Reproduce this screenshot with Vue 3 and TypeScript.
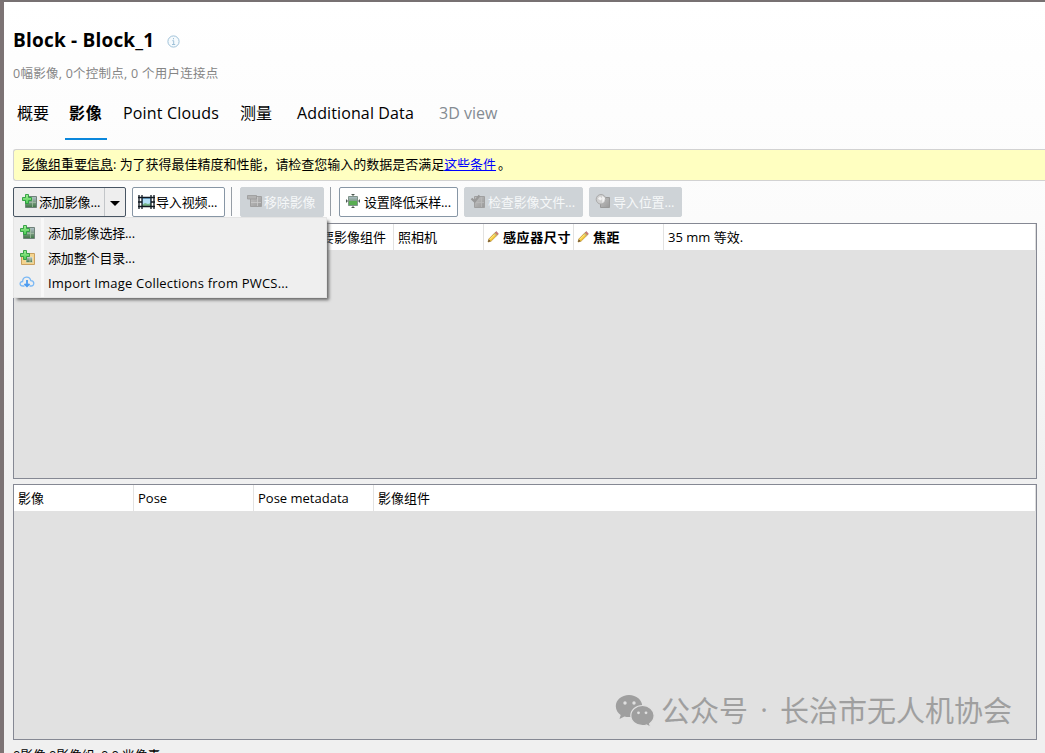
<script setup lang="ts">
import { ref } from 'vue'

interface Tab { label: string; cls: string }
interface Column { label: string; width: number; editable?: boolean; clipped?: boolean }

const tabs: Tab[] = [
  { label: '概要', cls: 'overview' },
  { label: '影像', cls: 'photos' },
  { label: 'Point Clouds', cls: 'clouds' },
  { label: '测量', cls: 'surveys' },
  { label: 'Additional Data', cls: 'extra' },
  { label: '3D view', cls: 'view' },
]
const active = ref('photos')

const groupColumns: Column[] = [
  { label: '主要影像组件', width: 380, clipped: true },
  { label: '照相机', width: 90 },
  { label: '感应器尺寸', width: 90, editable: true },
  { label: '焦距', width: 90, editable: true },
  { label: '35 mm 等效.', width: 372 },
]
const photoColumns: Column[] = [
  { label: '影像', width: 120 },
  { label: 'Pose', width: 120 },
  { label: 'Pose metadata', width: 120 },
  { label: '影像组件', width: 662 },
]
const menu = [
  { label: '添加影像选择...', icon: 'photo' },
  { label: '添加整个目录...', icon: 'folder' },
  { label: 'Import Image Collections from PWCS...', icon: 'cloud' },
]
</script>

<template>
  <main class="window">
    <svg class="defs" width="0" height="0" aria-hidden="true">
      <defs>
        <linearGradient id="leaf" x1="0" y1="0" x2="0" y2="1">
          <stop offset="0" stop-color="#b3c2cc" /><stop offset=".5" stop-color="#7e9c88" /><stop offset="1" stop-color="#3d7741" />
        </linearGradient>
        <linearGradient id="plus" x1="0" y1="0" x2="0" y2="1">
          <stop offset="0" stop-color="#a4ee94" /><stop offset="1" stop-color="#4acb54" />
        </linearGradient>
        <linearGradient id="ash" x1="0" y1="0" x2="1" y2="1">
          <stop offset="0" stop-color="#c2c2c2" /><stop offset="1" stop-color="#999" />
        </linearGradient>
        <symbol id="i-photo" viewBox="0 0 16 16">
          <path d="M4.500 3.500h11v11h-11z" fill="url(#leaf)" stroke="#70827a" />
          <path d="M11.500 4v10M5 9.500h10" stroke="#a9c4a8" stroke-width=".7" />
          <path d="M4.500 1.500h3v3h3v3h-3v3h-3v-3h-3v-3h3z" fill="url(#plus)" stroke="#2a9c3d" stroke-width=".9" />
        </symbol>
        <symbol id="i-folder" viewBox="0 0 16 16">
          <path d="M2.500 7h5l1-2.500h7v11h-13z" fill="#f4d48e" stroke="#c9a061" />
          <path d="M7 8h6.500v5.500H7z" fill="url(#leaf)" stroke="#eee9d0" stroke-width=".6" />
          <path d="M11 8v5" stroke="#c9d8bd" stroke-width=".6" />
          <path d="M4.500 1.500h3v3h3v3h-3v3h-3v-3h-3v-3h3z" fill="url(#plus)" stroke="#2a9c3d" stroke-width=".9" />
        </symbol>
        <symbol id="i-cloud" viewBox="0 0 16 16">
          <path d="M5.500 12H4C.2 12 .2 7.500 3.600 7.500 3.700 2.200 10.600 1.500 11.800 6.600c4 .2 3.900 5.400.2 5.400h-1.500" fill="none" stroke="#7ab8f5" stroke-width="1.300" />
          <path d="M8 6v6M5.500 9.800L8 12.300l2.500-2.500" fill="none" stroke="#4b9bf0" stroke-width="1.800" />
        </symbol>
        <symbol id="i-film" viewBox="0 0 17 16">
          <path d="M4 4h9v8H4z" fill="#79b8e5" /><path d="M5 5h7v6H5z" fill="#b4e0f7" /><path d="M4 12v-1l3-2 3 1 3-1v3z" fill="#78b68a" />
          <path d="M1 1v14M4 1v14M13 1v14M16 1v14M0 3.500h17M0 12.500h17M0 8h4M13 8h4" stroke="#101820" stroke-width="1.300" fill="none" />
        </symbol>
        <symbol id="i-remove" viewBox="0 0 16 16">
          <path d="M4.500 3.500h11v10h-11z" fill="url(#ash)" stroke="#a0a0a0" />
          <path d="M11.500 4v9M5 9.500h10" stroke="#cacaca" stroke-width=".8" />
          <path d="M1.500 2.500h9v3.500h-9z" fill="#b2b2b2" stroke="#999" stroke-width=".8" />
        </symbol>
        <symbol id="i-scale" viewBox="0 0 16 16">
          <path d="M3.500 3.500h9v9h-9z" fill="url(#leaf)" stroke="#7f948a" />
          <path d="M4 8h8v4H4z" fill="#59ad51" />
          <path d="M8 1v2M8 13v2M1 8h2M13 8h2M6.500 1.500h3M6.500 14.500h3M1.500 6.500v3M14.500 6.500v3" stroke="#4c5951" />
        </symbol>
        <symbol id="i-check" viewBox="0 0 16 16">
          <path d="M4.500 3.500h10v11h-10z" fill="url(#ash)" stroke="#a0a0a0" />
          <path d="M11.500 4v10M5 9.500h9" stroke="#bababa" stroke-width=".8" />
          <path d="M1.500 5.500l3.200 3L9.500 2.500" fill="none" stroke="#999" stroke-width="2.300" />
        </symbol>
        <symbol id="i-position" viewBox="0 0 16 16">
          <path d="M5.500 4.500h9v10h-9z" fill="url(#ash)" stroke="#999" />
          <circle cx="6" cy="6.300" r="4.800" fill="#d0d0d0" stroke="#aaa" />
          <path d="M3 5.500l2-2 2 2-1 2-2-1zM7 3l3 2-1 3-1.500 2" fill="#f3f3f3" />
        </symbol>
        <symbol id="i-pencil" viewBox="0 0 12 12">
          <path d="M1 11l1-3.200L8.200 1.500l2.300 2.300-6.300 6.300z" fill="#f7c936" stroke="#b8892f" stroke-width=".7" />
          <path d="M8.200 1.500l1-1 2.300 2.300-1 1z" fill="#dc7777" stroke="#8d5d66" stroke-width=".5" />
          <path d="M7.200 2.500l2.300 2.300" stroke="#91a2b8" /><path d="M1 11l.8-2.700 1.900 1.900z" fill="#6b5234" />
          <path d="M2.800 8.500l5-5" stroke="#fff09a" />
        </symbol>
      </defs>
    </svg>

    <header class="heading">
      <h1>Block - Block_1</h1>
      <svg class="info" viewBox="0 0 13 13"><circle cx="6.500" cy="6.500" r="5.600" /><path d="M6.500 3v1.300M5.300 5.700h1.400v3.700M5 9.500h3.200" /></svg>
    </header>
    <p class="summary">0幅影像, 0个控制点, 0 个用户连接点</p>
    <nav class="tabs">
      <button v-for="t in tabs" :key="t.cls" :class="['tab', t.cls, { active: active === t.cls }]" @click="active = t.cls">{{ t.label }}</button>
    </nav>
    <div class="notice"><u>影像组重要信息</u>: 为了获得最佳精度和性能，请检查您输入的数据是否满足<a href="#">这些条件</a><span class="stop">。</span></div>

    <div class="toolbar">
      <div class="split">
        <button class="split-main"><svg class="icon"><use href="#i-photo" /></svg><span>添加影像...</span></button>
        <button class="split-arrow" aria-label="menu"><i /></button>
        <ul class="menu">
          <li v-for="m in menu" :key="m.icon" :class="m.icon"><svg class="icon"><use :href="'#i-' + m.icon" /></svg><span>{{ m.label }}</span></li>
        </ul>
      </div>
      <button class="btn video"><svg class="icon film"><use href="#i-film" /></svg><span>导入视频...</span></button>
      <b class="rule" />
      <button class="btn remove off"><svg class="icon"><use href="#i-remove" /></svg><span>移除影像</span></button>
      <b class="rule" />
      <button class="btn scale"><svg class="icon"><use href="#i-scale" /></svg><span>设置降低采样...</span></button>
      <button class="btn check off"><svg class="icon"><use href="#i-check" /></svg><span>检查影像文件...</span></button>
      <button class="btn position off"><svg class="icon"><use href="#i-position" /></svg><span>导入位置...</span></button>
    </div>

    <section class="table">
      <div class="thead">
        <div v-for="c in groupColumns" :key="c.label" :class="['cell', { editable: c.editable, clipped: c.clipped }]" :style="{ width: c.width + 'px' }">
          <svg v-if="c.editable" class="pencil"><use href="#i-pencil" /></svg><span>{{ c.label }}</span>
        </div>
      </div>
    </section>
    <section class="table second">
      <div class="thead">
        <div v-for="c in photoColumns" :key="c.label" class="cell" :style="{ width: c.width + 'px' }"><span>{{ c.label }}</span></div>
      </div>
      <div class="watermark">
        <svg viewBox="0 0 40 34">
          <path d="M14 1C6.500 1 .8 6 .8 12.200c0 3.600 1.900 6.700 4.900 8.700L4.500 25l4.900-2.500c1.500.4 3 .6 4.600.6 7.400 0 13.300-4.900 13.300-10.900S21.400 1 14 1z" />
          <path class="front" d="M27.500 11.500c-6.600 0-11.700 4.500-11.700 10.100s5.100 10 11.700 10c1.400 0 2.700-.2 3.900-.6l4.200 2.300-1-3.600c2.700-1.900 4.500-4.800 4.500-8.100 0-5.600-5-10.100-11.600-10.100z" />
          <g class="eyes"><circle cx="10" cy="9" r="1.700" /><circle cx="19" cy="9" r="1.700" /><circle cx="23.500" cy="18.800" r="1.400" /><circle cx="31" cy="18.800" r="1.400" /></g>
        </svg>
        <span class="account">公众号</span><span class="dot">·</span><span class="name">长治市无人机协会</span>
      </div>
    </section>
    <footer>0影像,0影像组, 0.0 兆像素</footer>
  </main>
</template>

<style>
html, body { margin: 0; overflow: hidden; background: #f0f0f0; }
</style>

<style scoped>
* { box-sizing: border-box; }
.window {
  width: 1045px; height: 753px; overflow: hidden; padding: 25px 0 0 9px;
  display: flex; flex-direction: column;
  border-left: 4px solid #7c7374; border-top: 2px solid #777172;
  background: linear-gradient(#fff 0, #fbfbfb 220px, #f0f0f0 480px);
  color: #000; font: 13px/18px "Open Sans", "Noto Sans CJK SC", sans-serif;
}
.defs { position: absolute; }
button { font: inherit; color: inherit; letter-spacing: inherit; padding: 0; margin: 0; border: 0; background: none; white-space: nowrap; }
.heading { display: flex; align-items: center; height: 26px; flex: none; }
h1 { margin: 0; font-size: 19px; line-height: 26px; font-weight: 700; width: 154px; letter-spacing: .2px; white-space: nowrap; }
.info { width: 13px; height: 13px; margin-top: 3px; fill: #f5fafd; stroke: #9fc1d8; stroke-width: 1; }
.summary { margin: 11px 0 0; height: 20px; line-height: 20px; font-size: 12.500px; letter-spacing: .25px; color: #858585; flex: none; }
.tabs { display: flex; height: 41px; margin-top: 15px; flex: none; font-size: 16px; }
.tab { height: 41px; padding-bottom: 11px; text-align: left; border-bottom: 2px solid transparent; line-height: 28px; }
.overview { width: 52px; padding-left: 4px; }
.photos { width: 42px; padding-left: 4px; letter-spacing: .8px; }
.active { border-color: #0b87dc; font-weight: 700; }
.clouds { width: 133px; padding-left: 16px; letter-spacing: .17px; }
.surveys { width: 44px; }
.extra { width: 142px; margin-left: 13px; letter-spacing: .12px; }
.view { color: #848b92; }
.notice {
  height: 32px; margin-top: 9px; padding-left: 8px; line-height: 29px; flex: none; letter-spacing: -.02px;
  background: #ffffc1; border: 1px solid #d2d2d2; border-right: 0; border-radius: 3px 0 0 3px; white-space: nowrap;
}
.notice a { color: #00f; }
.stop { margin-left: 2px; }
.toolbar { display: flex; height: 30px; margin-top: 6px; flex: none; letter-spacing: -.15px; }
.split { position: relative; display: flex; width: 113px; border: 1px solid #485563; border-radius: 2px; background: #eee; }
.split-main { display: flex; align-items: center; width: 91px; padding-left: 7px; border-right: 1px solid #c3c6c9; }
.split-arrow { flex: 1; display: flex; justify-content: center; align-items: center; }
.split-arrow i { border: 5px solid transparent; border-top-color: #000; border-bottom: 0; margin-top: 2px; }
.icon { width: 16px; height: 16px; flex: none; }
.toolbar .btn .icon, .split-main .icon { margin-top: -2px; }
.split-main span { margin-left: 2px; }
.btn { display: flex; align-items: center; border: 1px solid #8796a5; border-radius: 2px; background: #fff; }
.video { width: 93px; margin-left: 6px; padding-left: 5px; }
.toolbar .btn .film { width: 17px; margin-top: 0; }
.video span { margin-left: 1px; }
.rule { width: 1px; height: 29px; margin-left: 6px; background: #969da5; }
.off { background: #ced3d7; border-color: #ced3d7; color: #f6f8f9; }
.remove { width: 84px; margin-left: 8px; padding-left: 5px; }
.remove span { margin-left: 2px; }
.scale { width: 119px; margin-left: 8px; padding-left: 5px; }
.scale span { margin-left: 3px; }
.check { width: 119px; margin-left: 6px; padding-left: 5px; }
.check span { margin-left: 2px; }
.position { width: 93px; margin-left: 6px; padding-left: 5px; }
.position span { margin-left: 2px; }
.menu {
  position: absolute; z-index: 3; left: -1px; top: 29px; width: 314px; height: 81px; margin: 0; padding: 2px;
  list-style: none; border: 1px solid #e4e4e4; background: linear-gradient(90deg, #efefef 27px, #f8f8f8 27px 30px, #efefef 30px);
  box-shadow: 3px 3px 3px -1px #666;
}
.menu li { display: flex; align-items: center; height: 25px; padding-left: 3px; white-space: nowrap; }
.menu .icon { margin-top: -1px; }
.menu span { margin-left: 13px; }
.menu .cloud { letter-spacing: .2px; }
.table { position: relative; flex: none; width: 1024px; height: 256px; margin-top: 6px; border: 1px solid #858893; background: #e1e1e1; }
.second { margin-top: 5px; }
.thead { display: flex; height: 26px; background: #fff; border-right: 1px solid #ddd; }
.cell { display: flex; align-items: center; flex: none; padding-left: 4px; border-right: 1px solid #e2e2e2; white-space: nowrap; }
.cell:last-child { border-right: 0; flex: 1; }
.clipped { justify-content: flex-end; padding: 0 7px 0 0; }
.editable { font-weight: 700; padding-left: 3px; letter-spacing: .6px; }
.editable span { margin-left: 4px; }
.pencil { width: 12px; height: 12px; flex: none; }
.watermark { position: absolute; left: 601px; top: 206px; height: 38px; display: flex; align-items: center; color: #9f9f9f; font: 29px/38px "Noto Sans CJK SC", sans-serif; white-space: nowrap; }
.watermark svg { width: 40px; height: 34px; margin-top: 1px; fill: #9f9f9f; }
.watermark span { margin-top: -2px; }
.front { stroke: #e0e0e0; stroke-width: 1.200; }
.eyes { fill: #e0e0e0; }
.watermark .account { margin-left: 6px; }
.dot { width: 32px; text-align: center; font-family: "Open Sans", sans-serif; }
footer { margin-top: 6px; line-height: 18px; height: 18px; flex: none; letter-spacing: -.2px; white-space: nowrap; }
</style>
